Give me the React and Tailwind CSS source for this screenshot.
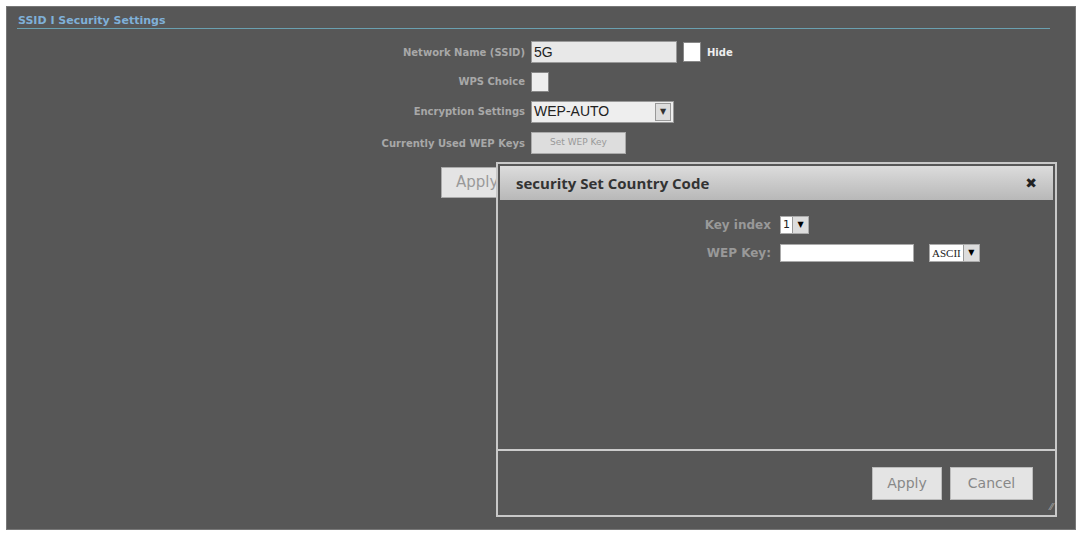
export default function App() {
  const f = { fontFamily: '"DejaVu Sans", Verdana, sans-serif' };
  return (
    <div className="w-[1082px] h-[534px] bg-white p-[6px] overflow-hidden" style={f}>
      <div className="relative w-[1070px] h-[524px] bg-[#575757] border border-[#777]">
        <div className="pt-[7px] px-[10px]">
          <div className="text-[11px] font-bold text-[#7fb0d8] leading-[14px] pl-[1px]">SSID I Security Settings</div>
          <div className="h-[1px] bg-[#6aa0b0] w-[1033px]"></div>
        </div>
        <div className="flex flex-col mt-[8px]">
          {[
            ["Network Name (SSID)", <div className="flex items-center gap-[6px]"><div className="w-[146px] h-[22px] bg-[#e8e8e8] border border-[#999] text-[14px] text-[#222] px-[2px] leading-[20px]" style={{fontFamily:'"Liberation Sans", Arial, sans-serif'}}>5G</div><div className="w-[18px] h-[20px] bg-white border border-[#888]"></div><span className="text-[10px] font-bold text-[#eee]">Hide</span></div>, 30],
            ["WPS Choice", <div className="w-[18px] h-[20px] bg-[#eee] border border-[#888]"></div>, 29],
            ["Encryption Settings", <div className="flex w-[143px] h-[22px] bg-[#eee] border border-[#999] items-center"><span className="flex-1 text-[14px] text-[#222] px-[2px]" style={{fontFamily:'"Liberation Sans", Arial, sans-serif'}}>WEP-AUTO</span><span className="w-[16px] h-[18px] mr-[2px] bg-[#ddd] border border-[#999] text-[8px] flex items-center justify-center text-[#333]">▼</span></div>, 31],
            ["Currently Used WEP Keys", <div className="w-[95px] h-[22px] bg-[#ddd] border border-[#aaa] text-[9px] text-[#999] flex items-center justify-center">Set WEP Key</div>, 32],
          ].map(([l, c, h], i) => (
            <div key={i} className="flex items-center" style={{ height: h }}>
              <div className="w-[524px] text-right pr-[6px] text-[10px] font-bold text-[#a8a8a8]">{l}</div>
              {c}
            </div>
          ))}
        </div>
        <div className="ml-[434px] mt-[8px] w-[80px] h-[31px] bg-[#e4e4e4] border border-[#aaa] text-[15px] text-[#999] pl-[14px] leading-[29px]">Apply</div>

        <div className="absolute left-[489px] top-[155px] w-[561px] h-[355px] bg-[#575757] border-2 border-[#c8c8c8] flex flex-col">
          <div className="mx-[2px] mt-[2px] h-[34px] bg-gradient-to-b from-[#dcdcdc] to-[#b8b8b8] flex items-center justify-between px-[16px]">
            <span className="text-[15px] font-bold text-[#333]" style={{fontFamily:'"Open Sans", sans-serif'}}>security Set Country Code</span>
            <span className="text-[14px] font-bold text-[#222]">✖</span>
          </div>
          <div className="flex-1 flex flex-col pt-[12px]">
            <div className="flex items-center h-[26px]">
              <div className="w-[282px] text-right pr-[9px] text-[12px] font-bold text-[#999]">Key index</div>
              <div className="flex h-[18px] bg-white border border-[#aaa] items-center"><span className="text-[11px] px-[2px] text-[#222]">1</span><span className="w-[16px] h-[16px] bg-[#ddd] border-l border-[#999] text-[8px] flex items-center justify-center">▼</span></div>
            </div>
            <div className="flex items-center h-[30px]">
              <div className="w-[282px] text-right pr-[9px] text-[12px] font-bold text-[#999]">WEP Key:</div>
              <div className="w-[134px] h-[18px] bg-white border border-[#aaa]"></div>
              <div className="ml-[15px] flex h-[18px] bg-white border border-[#aaa] items-center"><span className="text-[11px] px-[2px] text-[#222]" style={{fontFamily:'"Liberation Serif", serif'}}>ASCII</span><span className="w-[16px] h-[16px] bg-[#ddd] border-l border-[#999] text-[8px] flex items-center justify-center">▼</span></div>
            </div>
          </div>
          <div className="h-[2px] bg-[#ccc]"></div>
          <div className="h-[64px] flex justify-end items-center gap-[8px] pr-[22px] relative">
            <div className="w-[70px] h-[33px] bg-[#e4e4e4] border border-[#bbb] text-[14px] text-[#888] flex items-center justify-center">Apply</div>
            <div className="w-[83px] h-[33px] bg-[#e4e4e4] border border-[#bbb] text-[14px] text-[#888] flex items-center justify-center">Cancel</div>
            <span className="absolute right-[2px] bottom-[1px] text-[9px] text-[#aaa]">⁄⁄</span>
          </div>
        </div>
      </div>
    </div>
  );
}
